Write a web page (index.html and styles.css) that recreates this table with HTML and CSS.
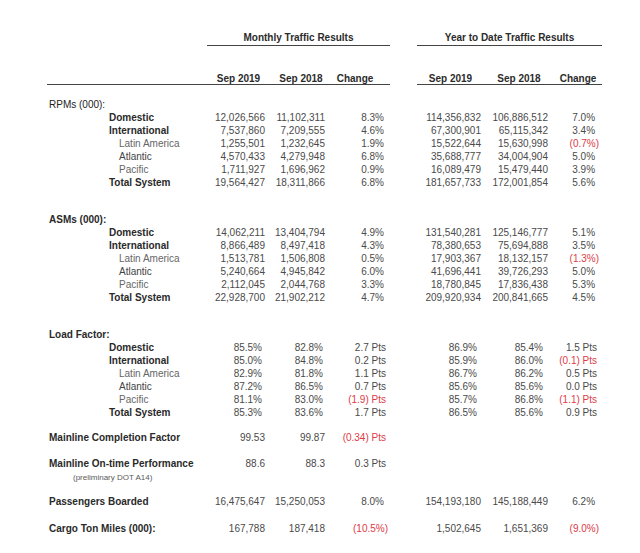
FILE: index.html
```html
<!DOCTYPE html>
<html>
<head>
<meta charset="utf-8">
<link rel="stylesheet" href="styles.css">
</head>
<body>
<div class="wrap">
<table class="traffic">
  <colgroup>
    <col class="w-label"><col class="w-m1"><col class="w-m2"><col class="w-m3"><col class="w-gap"><col class="w-y1"><col class="w-y2"><col class="w-y3">
  </colgroup>
  <thead>
    <tr class="titles">
      <th></th>
      <th class="title" colspan="3">Monthly Traffic Results</th>
      <th></th>
      <th class="title" colspan="3">Year to Date Traffic Results</th>
    </tr>
    <tr class="heads">
      <th class="hd"></th>
      <th class="hd">Sep 2019</th>
      <th class="hd">Sep 2018</th>
      <th class="hd hd-chg">Change</th>
      <th class="hd-none"></th>
      <th class="hd">Sep 2019</th>
      <th class="hd">Sep 2018</th>
      <th class="hd">Change</th>
    </tr>
  </thead>
  <tbody>
    <tr class="gap-13"><td class="sec plain">RPMs (000):</td><td></td><td></td><td></td><td></td><td></td><td></td><td></td></tr>
    <tr><td class="lbl">Domestic</td><td>12,026,566</td><td>11,102,311</td><td>8.3%</td><td></td><td>114,356,832</td><td>106,886,512</td><td>7.0%</td></tr>
    <tr><td class="lbl">International</td><td>7,537,860</td><td>7,209,555</td><td>4.6%</td><td></td><td>67,300,901</td><td>65,115,342</td><td>3.4%</td></tr>
    <tr><td class="sub">Latin America</td><td>1,255,501</td><td>1,232,645</td><td>1.9%</td><td></td><td>15,522,644</td><td>15,630,998</td><td class="neg">(0.7%)</td></tr>
    <tr><td class="sub dark">Atlantic</td><td>4,570,433</td><td>4,279,948</td><td>6.8%</td><td></td><td>35,688,777</td><td>34,004,904</td><td>5.0%</td></tr>
    <tr><td class="sub">Pacific</td><td>1,711,927</td><td>1,696,962</td><td>0.9%</td><td></td><td>16,089,479</td><td>15,479,440</td><td>3.9%</td></tr>
    <tr><td class="lbl">Total System</td><td>19,564,427</td><td>18,311,866</td><td>6.8%</td><td></td><td>181,657,733</td><td>172,001,854</td><td>5.6%</td></tr>

    <tr class="gap-24"><td class="sec">ASMs (000):</td><td></td><td></td><td></td><td></td><td></td><td></td><td></td></tr>
    <tr><td class="lbl">Domestic</td><td>14,062,211</td><td>13,404,794</td><td>4.9%</td><td></td><td>131,540,281</td><td>125,146,777</td><td>5.1%</td></tr>
    <tr><td class="lbl">International</td><td>8,866,489</td><td>8,497,418</td><td>4.3%</td><td></td><td>78,380,653</td><td>75,694,888</td><td>3.5%</td></tr>
    <tr><td class="sub">Latin America</td><td>1,513,781</td><td>1,506,808</td><td>0.5%</td><td></td><td>17,903,367</td><td>18,132,157</td><td class="neg">(1.3%)</td></tr>
    <tr><td class="sub dark">Atlantic</td><td>5,240,664</td><td>4,945,842</td><td>6.0%</td><td></td><td>41,696,441</td><td>39,726,293</td><td>5.0%</td></tr>
    <tr><td class="sub">Pacific</td><td>2,112,045</td><td>2,044,768</td><td>3.3%</td><td></td><td>18,780,845</td><td>17,836,438</td><td>5.3%</td></tr>
    <tr><td class="lbl">Total System</td><td>22,928,700</td><td>21,902,212</td><td>4.7%</td><td></td><td>209,920,934</td><td>200,841,665</td><td>4.5%</td></tr>

    <tr class="gap-24"><td class="sec">Load Factor:</td><td></td><td></td><td></td><td></td><td></td><td></td><td></td></tr>
    <tr class="lf"><td class="lbl">Domestic</td><td>85.5%</td><td>82.8%</td><td class="pts">2.7 Pts</td><td></td><td>86.9%</td><td>85.4%</td><td class="pts">1.5 Pts</td></tr>
    <tr class="lf"><td class="lbl">International</td><td>85.0%</td><td>84.8%</td><td class="pts">0.2 Pts</td><td></td><td>85.9%</td><td>86.0%</td><td class="pts neg">(0.1) Pts</td></tr>
    <tr class="lf"><td class="sub">Latin America</td><td>82.9%</td><td>81.8%</td><td class="pts">1.1 Pts</td><td></td><td>86.7%</td><td>86.2%</td><td class="pts">0.5 Pts</td></tr>
    <tr class="lf"><td class="sub dark">Atlantic</td><td>87.2%</td><td>86.5%</td><td class="pts">0.7 Pts</td><td></td><td>85.6%</td><td>85.6%</td><td class="pts">0.0 Pts</td></tr>
    <tr class="lf"><td class="sub">Pacific</td><td>81.1%</td><td>83.0%</td><td class="pts neg">(1.9) Pts</td><td></td><td>85.7%</td><td>86.8%</td><td class="pts neg">(1.1) Pts</td></tr>
    <tr class="lf"><td class="lbl">Total System</td><td>85.3%</td><td>83.6%</td><td class="pts">1.7 Pts</td><td></td><td>86.5%</td><td>85.6%</td><td class="pts">0.9 Pts</td></tr>

    <tr class="gap-12"><td class="sec">Mainline Completion Factor</td><td>99.53</td><td>99.87</td><td class="pts neg">(0.34) Pts</td><td></td><td></td><td></td><td></td></tr>
    <tr class="gap-13"><td class="sec">Mainline On-time Performance</td><td>88.6</td><td>88.3</td><td class="pts">0.3 Pts</td><td></td><td></td><td></td><td></td></tr>
    <tr class="gap-1"><td class="note">(preliminary DOT A14)</td><td></td><td></td><td></td><td></td><td></td><td></td><td></td></tr>
    <tr class="gap-11"><td class="sec">Passengers Boarded</td><td>16,475,647</td><td>15,250,053</td><td>8.0%</td><td></td><td>154,193,180</td><td>145,188,449</td><td>6.2%</td></tr>
    <tr class="gap-14"><td class="sec">Cargo Ton Miles (000):</td><td>167,788</td><td>187,418</td><td class="neg">(10.5%)</td><td></td><td>1,502,645</td><td>1,651,369</td><td class="neg">(9.0%)</td></tr>
  </tbody>
</table>
</div>
</body>
</html>
```

FILE: styles.css
```css
html, body {
  margin: 0;
  padding: 0;
  background: #ffffff;
}

.wrap {
  padding: 29px 0 0 47px;
}

.traffic {
  border-collapse: separate;
  border-spacing: 0;
  table-layout: fixed;
  width: 555px;
  font-family: "Liberation Sans", Arial, sans-serif;
  font-size: 10px;
  color: #4a4a4a;
}

.w-label { width: 160px; }
.w-m1 { width: 63px; }
.w-m2 { width: 62px; }
.w-m3 { width: 58px; }
.w-gap { width: 27px; }
.w-y1 { width: 67px; }
.w-y2 { width: 70px; }
.w-y3 { width: 48px; }

.traffic th,
.traffic td {
  padding: 0;
  line-height: 13px;
  white-space: nowrap;
  vertical-align: bottom;
  font-weight: normal;
}

/* header rows */
.traffic th.title {
  padding-top: 1px;
  line-height: 15px;
  font-weight: bold;
  color: #2b2b2b;
  text-align: center;
  border-bottom: 1px solid #444444;
}

.traffic th.hd {
  padding-top: 27px;
  line-height: 11px;
  font-weight: bold;
  color: #2b2b2b;
  text-align: center;
  border-bottom: 1px solid #444444;
}

.traffic th.hd-chg {
  padding-right: 12px;
}

/* numeric columns */
.traffic td { text-align: right; }
.traffic td:nth-child(1) { text-align: left; }
.traffic td:nth-child(2) { padding-right: 5px; }
.traffic td:nth-child(3) { padding-right: 7px; }
.traffic td:nth-child(4) { padding-right: 6px; }
.traffic td:nth-child(6) { padding-right: 3px; }
.traffic td:nth-child(7) { padding-right: 6px; }
.traffic td:nth-child(8) { padding-right: 7px; }

.traffic tr.lf td:nth-child(2) { padding-right: 8px; }
.traffic tr.lf td:nth-child(3) { padding-right: 9px; }
.traffic tr.lf td:nth-child(6) { padding-right: 7px; }
.traffic tr.lf td:nth-child(7) { padding-right: 11px; }

.traffic td.neg { color: #e03a46; }
.traffic td.neg:nth-child(4) { padding-right: 2px; }
.traffic td.neg:nth-child(8) { padding-right: 3px; }
.traffic td.pts:nth-child(4) { padding-right: 4px; }
.traffic td.pts:nth-child(8) { padding-right: 5px; }

/* labels */
.traffic td.sec {
  padding-left: 2px;
  font-weight: bold;
  color: #2a2a2a;
}

.traffic td.sec.plain {
  font-weight: normal;
  color: #1e1e1e;
}

.traffic td.lbl {
  padding-left: 62px;
  font-weight: bold;
  color: #2a2a2a;
}

.traffic td.sub {
  padding-left: 72px;
  color: #666666;
}

.traffic td.sub.dark {
  color: #444444;
}

.traffic td.note {
  padding-left: 26px;
  font-size: 8px;
  color: #5a5a5a;
}

/* vertical gaps between blocks */
.traffic tr.gap-1 td { padding-top: 1px; }
.traffic tr.gap-11 td { padding-top: 11px; }
.traffic tr.gap-12 td { padding-top: 12px; }
.traffic tr.gap-13 td { padding-top: 13px; }
.traffic tr.gap-14 td { padding-top: 14px; }
.traffic tr.gap-24 td { padding-top: 24px; }
```
